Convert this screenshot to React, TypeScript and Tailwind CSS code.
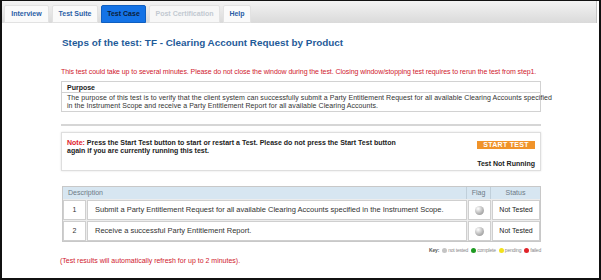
import type { ReactNode } from "react";

const tabs = [
  { label: "Interview", w: "w-[45px]", kind: "normal" },
  { label: "Test Suite", w: "w-[46px]", kind: "normal" },
  { label: "Test Case", w: "w-[45px]", kind: "active" },
  { label: "Post Certification", w: "w-[71px]", kind: "disabled" },
  { label: "Help", w: "w-[28px]", kind: "normal" },
];

const steps = [
  { n: 1, text: "Submit a Party Entitlement Request for all available Clearing Accounts specified in the Instrument Scope." },
  { n: 2, text: "Receive a successful Party Entitlement Report." },
];

const Ball = ({ className }: { className: string }) => (
  <span className={`inline-block rounded-full ${className}`} />
);

const Cell = ({ className, children }: { className: string; children?: ReactNode }) => (
  <div className={`border border-[#cfcfcf] bg-white flex items-center ${className}`}>{children}</div>
);

export default function App() {
  return (
    <div className="w-[601px] h-[280px] bg-white border-2 border-t border-[#111] overflow-hidden font-['Liberation_Sans',Arial,sans-serif] text-[#333]">
      {/* tab bar */}
      <div className="h-[22px] mr-[2px] pt-[4px] pl-[2px] flex gap-[3px] bg-gradient-to-b from-[#f3f3f3] to-[#dadada] border-r border-[#c4c4c4]">
        {tabs.map((t) => (
          <div
            key={t.label}
            className={`${t.w} h-[18px] flex items-center justify-center rounded-t-[2px] text-[7px] font-bold border ${
              t.kind === "active"
                ? "bg-[#1473e6] border-[#0f5fc0] text-[#0b1e3c]"
                : t.kind === "disabled"
                ? "bg-[#f7f7f7] border-[#e2e2e2] text-[#c2c9d1]"
                : "bg-[#fafafa] border-[#e2e2e2] text-[#2b5ea6]"
            }`}
          >
            {t.label}
          </div>
        ))}
      </div>

      <div className="pl-[59px] w-[541px]">
        <h1 className="mt-[14px] ml-[1px] text-[9.9px] leading-[12px] font-bold text-[#1f5b99] whitespace-nowrap">
          Steps of the test: TF - Clearing Account Request by Product
        </h1>

        <p className="mt-[18px] text-[7px] leading-[9px] tracking-[-0.07px] text-[#d0202e] whitespace-nowrap">
          This test could take up to several minutes. Please do not close the window during the test. Closing window/stopping test requires to rerun the test from step1.
        </p>

        {/* purpose */}
        <div className="mt-[5px] w-[480px] border border-[#d2d2d2]">
          <div className="h-[11px] px-[5px] text-[7px] leading-[11px] font-bold text-[#222] border-b border-[#d2d2d2]">Purpose</div>
          <div className="h-[18px] px-[5px] pt-[1px] text-[7px] leading-[7.5px] tracking-[0.06px] text-[#333] whitespace-nowrap">
            The purpose of this test is to verify that the client system can successfully submit a Party Entitlement Request for all available Clearing Accounts specified
            <br />
            in the Instrument Scope and receive a Party Entitlement Report for all available Clearing Accounts.
          </div>
        </div>

        <div className="mt-[12px] w-[480px] h-[2px] bg-[#d6d6d6]" />

        {/* note */}
        <div className="mt-[6px] w-[480px] h-[39px] border border-[#dedede] shadow-[0_0_2px_rgba(0,0,0,0.12)] flex justify-between pl-[5px] pr-[5px] pt-[6px]">
          <p className="text-[7px] leading-[8px] font-bold text-[#222]">
            <span className="text-[#e0202a]">Note: </span>
            Press the Start Test button to start or restart a Test. Please do not press the Start Test button
            <br />
            again if you are currently running this test.
          </p>
          <div className="flex flex-col items-end">
            <button className="mt-[2px] w-[58px] h-[8px] bg-[#f0932a] text-white text-[7px] leading-[8px] font-bold tracking-[0.3px]">
              START TEST
            </button>
            <span className="mt-[10px] text-[7px] leading-[9px] font-bold text-[#222]">Test Not Running</span>
          </div>
        </div>

        {/* steps table */}
        <div className="mt-[15px] ml-[1px] w-[479px] border border-[#c8c8c8] bg-[#ececec] text-[7px]">
          <div className="flex h-[12px] bg-[#d7e6f1] text-[#6d7a86]">
            <div className="flex-1 pl-[5px] leading-[12px] border-r border-[#c0cfda]">Description</div>
            <div className="w-[24px] text-center leading-[12px] border-r border-[#c0cfda]">Flag</div>
            <div className="w-[49px] text-center leading-[12px]">Status</div>
          </div>
          {steps.map((s) => (
            <div key={s.n} className="flex h-[21px] gap-[1px] pt-[1px]">
              <Cell className="w-[23px] justify-center">{s.n}</Cell>
              <Cell className="flex-1 pl-[7px] text-[7.5px] text-[#333]">{s.text}</Cell>
              <Cell className="w-[23px] justify-center">
                <Ball className="w-[9px] h-[9px] bg-[radial-gradient(circle_at_35%_30%,#ffffff,#b8b8b8_55%,#8a8a8a)]" />
              </Cell>
              <Cell className="w-[48px] justify-center text-[7px] text-[#222]">Not Tested</Cell>
            </div>
          ))}
        </div>

        {/* key */}
        <div className="mt-[5px] w-[480px] flex justify-end items-center gap-[1px] text-[5px] leading-[6px] text-[#8a8a8a] tracking-[-0.2px]">
          <span className="font-bold text-[#555] mr-[2px]">Key:</span>
          <Ball className="w-[5px] h-[5px] bg-[#c4c4c4]" />
          <span className="mr-[2px]">not tested</span>
          <Ball className="w-[5px] h-[5px] bg-[#1e9a22]" />
          <span className="mr-[2px]">complete</span>
          <Ball className="w-[5px] h-[5px] bg-[#f3e21c]" />
          <span className="mr-[2px]">pending</span>
          <Ball className="w-[5px] h-[5px] bg-[#e0232a]" />
          <span>failed</span>
        </div>

        <p className="mt-[3px] -ml-[1px] text-[7px] leading-[9px] text-[#d0202e]">
          (Test results will automatically refresh for up to 2 minutes).
        </p>
      </div>
    </div>
  );
}
